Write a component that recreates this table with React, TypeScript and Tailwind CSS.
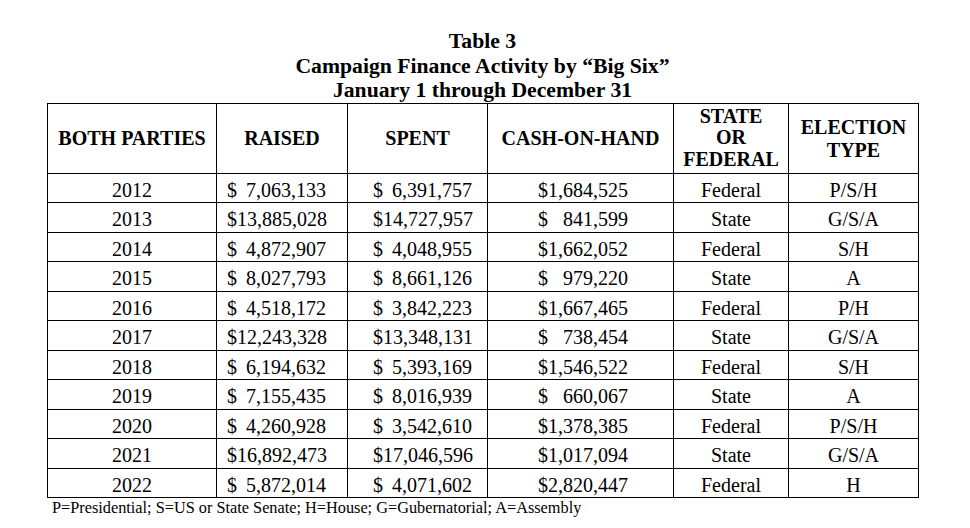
import React from 'react';

const rows = [
  ['2012', '7,063,133', '6,391,757', '1,684,525', 'Federal', 'P/S/H'],
  ['2013', '13,885,028', '14,727,957', '841,599', 'State', 'G/S/A'],
  ['2014', '4,872,907', '4,048,955', '1,662,052', 'Federal', 'S/H'],
  ['2015', '8,027,793', '8,661,126', '979,220', 'State', 'A'],
  ['2016', '4,518,172', '3,842,223', '1,667,465', 'Federal', 'P/H'],
  ['2017', '12,243,328', '13,348,131', '738,454', 'State', 'G/S/A'],
  ['2018', '6,194,632', '5,393,169', '1,546,522', 'Federal', 'S/H'],
  ['2019', '7,155,435', '8,016,939', '660,067', 'State', 'A'],
  ['2020', '4,260,928', '3,542,610', '1,378,385', 'Federal', 'P/S/H'],
  ['2021', '16,892,473', '17,046,596', '1,017,094', 'State', 'G/S/A'],
  ['2022', '5,872,014', '4,071,602', '2,820,447', 'Federal', 'H'],
];

// dollar sign pinned left, figure pinned right, like the typed table
function Money({ value, box }: { value: string; box: string }) {
  return (
    <div className={`flex justify-between ${box}`}>
      <span>$</span>
      <span>{value}</span>
    </div>
  );
}

export default function App() {
  return (
    <div
      className="w-[970px] h-[528px] bg-white text-black overflow-hidden"
      style={{ fontFamily: '"Liberation Serif", "Times New Roman", serif' }}
    >
      <div className="ml-[47px] w-[871px] pt-[29px]">
        <div className="text-center font-bold text-[21.7px] leading-[24.5px]">
          <p>Table 3</p>
          <p>Campaign Finance Activity by “Big Six”</p>
          <p>January 1 through December 31</p>
        </div>

        <table className="w-[871px] table-fixed border-collapse border border-black text-[20px]">
          <colgroup>
            <col className="w-[169px]" />
            <col className="w-[131px]" />
            <col className="w-[140px]" />
            <col className="w-[186px]" />
            <col className="w-[115px]" />
            <col className="w-[130px]" />
          </colgroup>
          <thead className="font-bold leading-[22px]">
            <tr className="h-[70px]">
              <th className="border border-black font-bold">BOTH PARTIES</th>
              <th className="border border-black font-bold">RAISED</th>
              <th className="border border-black font-bold">SPENT</th>
              <th className="border border-black font-bold">CASH-ON-HAND</th>
              <th className="border border-black font-bold leading-[21.5px]">
                STATE
                <br />
                OR
                <br />
                FEDERAL
              </th>
              <th className="border border-black font-bold leading-[23px] pt-[2px]">
                ELECTION
                <br />
                TYPE
              </th>
            </tr>
          </thead>
          <tbody className="leading-[22px]">
            {rows.map((r) => (
              <tr key={r[0]} className="h-[29.5px]">
                <td className="border border-black text-center pt-[4px]">{r[0]}</td>
                <td className="border border-black pt-[4px]">
                  <Money value={r[1]} box="w-[99px] ml-[10px]" />
                </td>
                <td className="border border-black pt-[4px]">
                  <Money value={r[2]} box="w-[99px] ml-[25px]" />
                </td>
                <td className="border border-black pt-[4px]">
                  <Money value={r[3]} box="w-[90px] ml-[50px]" />
                </td>
                <td className="border border-black text-center pt-[4px]">{r[4]}</td>
                <td className="border border-black text-center pt-[4px]">{r[5]}</td>
              </tr>
            ))}
          </tbody>
        </table>

        <p className="pl-[5px] mt-[1px] text-[16.3px] leading-[18px]">
          P=Presidential; S=US or State Senate; H=House; G=Gubernatorial; A=Assembly
        </p>
      </div>
    </div>
  );
}
